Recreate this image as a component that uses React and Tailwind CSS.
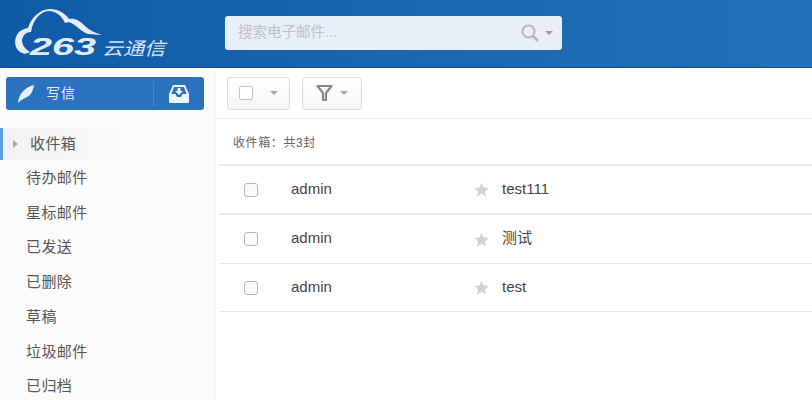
import React from "react";

const folders = ["待办邮件", "星标邮件", "已发送", "已删除", "草稿", "垃圾邮件", "已归档"];
const mails = [
    { subject: "test111", h: "h-[49px]", border: "border-b-2 border-b-[#e6e6e6]" },
    { subject: "测试", h: "h-[49px]", border: "border-b border-b-[#e8e8e8]" },
    { subject: "test", h: "h-[48px]", border: "border-b border-b-[#e8e8e8]" },
];
const cjk = "font-['Liberation_Sans','Noto_Sans_CJK_SC',sans-serif]";

const Caret = ({ className }) => (
    <span className={`inline-block w-0 h-0 border-x-[4px] border-x-transparent border-t-[4px] ${className}`} />
);

const Logo = () => (
    <div className="relative w-[170px] h-[60px] ml-[13px] mt-[5px] shrink-0">
        <svg width="110" height="50" viewBox="13 5 110 50" className="absolute left-0 top-0">
            <path d="M22 53 C15 50 14 42 16 37 C18 31 23 29 28 28 C31 18 40 9 50 9 C58 9 65 13 69 19 C75 18 80 21 84 25 C89 30 95 33 102 35 L88 34 C82 32 78 27 73 24 C70 22 68 22 65 23 C62 16 56 11 49 11 C41 11 33 19 31 32 C26 32 23 35 22 40 C22 45 25 49 30 52 C27 54 24 54 22 53 Z" fill="#e3edf7" />
        </svg>
        <span className="absolute left-[17px] top-[28px] text-[#e3edf7] text-[24px] leading-[28px] font-bold italic font-['Liberation_Sans',sans-serif] scale-x-[1.65] origin-left">263</span>
        <span className="absolute left-[89px] top-[31px] text-[#dbe7f3] text-[18px] leading-[22px] italic font-['Noto_Sans_CJK_SC',sans-serif] scale-x-[1.17] origin-left whitespace-nowrap">云通信</span>
    </div>
);

const App = () => {
    return (
        <div className={`w-[812px] h-[400px] overflow-hidden bg-white flex flex-col ${cjk}`}>
            <header className="h-[68px] shrink-0 flex bg-gradient-to-r from-[#0f5ba8] to-[#2371bb] border-b border-b-[#0d4f8f]">
                <Logo />
                <div className="ml-[42px] mt-[16px] w-[337px] h-[34px] bg-[#e8eff8] rounded-[3px] flex items-center pl-[13px] pr-[9px]">
                    <span className="text-[#bcc2c9] text-[14.5px]">搜索电子邮件...</span>
                    <svg width="20" height="20" viewBox="0 0 20 20" className="ml-auto" fill="none" stroke="#b5b9be">
                        <circle cx="8.5" cy="8.5" r="6" strokeWidth="2" />
                        <path d="M13 13 L18 18" strokeWidth="3" />
                    </svg>
                    <Caret className="ml-[5px] border-t-[#9a9ea3]" />
                </div>
            </header>

            <div className="flex flex-1 min-h-0">
                <aside className="w-[216px] shrink-0 bg-[#fbfbfb] border-r border-r-[#f3f3f3] pt-[9px]">
                    <div className="ml-[6px] w-[198px] h-[33px] bg-[#2b73bf] rounded-[3px] flex items-center text-[#e4edf6]">
                        <svg width="18" height="20" viewBox="0 0 18 20" className="ml-[11px]">
                            <path d="M1 19 C2 11 6 4 17 1 C16 7 14 12 8 14 C6 15 4 16 1 19 Z" fill="#e8f0f8" />
                        </svg>
                        <span className="ml-[11px] text-[14px] tracking-[1px]">写信</span>
                        <div className="ml-auto w-[51px] h-[25px] border-l border-l-[#4a86c6] flex items-center justify-center">
                            <svg width="22" height="20" viewBox="0 0 22 20">
                                <path d="M5 1 H17 L21 10 V18 Q21 19 20 19 H2 Q1 19 1 18 V10 Z" fill="#eef4fa" />
                                <path d="M6 3 H16 L18.5 10 H14.5 L13 13 H9 L7.5 10 H3.5 Z" fill="#2b73bf" />
                                <path d="M9.5 4 H12.5 V7 H15 L11 11 L7 7 H9.5 Z" fill="#eef4fa" />
                            </svg>
                        </div>
                    </div>

                    <nav className="mt-[18px]">
                        <div className="h-[32px] flex items-center border-l-[3px] border-l-[#5a9bd8] bg-gradient-to-r from-[#f1f1f1] to-[#fbfbfb] to-[60%]">
                            <span className="ml-[10px] w-0 h-0 border-y-[4px] border-y-transparent border-l-[5px] border-l-[#a8a8a8]" />
                            <span className="ml-[12px] text-[15px] tracking-[0.4px] text-[#555]">收件箱</span>
                        </div>
                        <ul className="mt-[1px]">
                            {folders.map((name) => (
                                <li key={name} className="h-[34.7px] flex items-center pl-[26px] text-[15px] tracking-[0.4px] text-[#555]">
                                    {name}
                                </li>
                            ))}
                        </ul>
                    </nav>
                </aside>

                <main className="flex-1 min-w-0 pl-[3px]">
                    <div className="h-[51px] -ml-[3px] flex items-center pl-[11px] gap-[12px] border-b border-b-[#ececec]">
                        <div className="w-[63px] h-[33px] border border-[#d9d9d9] rounded-[3px] bg-gradient-to-b from-white to-[#f5f5f5] flex items-center pl-[11px]">
                            <span className="w-[14px] h-[14px] border-[1.5px] border-[#c4c4c4] rounded-[2px] bg-white" />
                            <Caret className="ml-[17px] border-t-[#a5a5a5]" />
                        </div>
                        <div className="w-[60px] h-[33px] border border-[#d9d9d9] rounded-[3px] bg-gradient-to-b from-white to-[#f5f5f5] flex items-center pl-[13px]">
                            <svg width="17" height="18" viewBox="0 0 17 18" fill="none" stroke="#888" strokeWidth="2.2">
                                <path d="M1.5 2 H15.5 L10 9 V16 H7 V9 Z" strokeLinejoin="round" />
                            </svg>
                            <Caret className="ml-[7px] border-t-[#a5a5a5]" />
                        </div>
                    </div>

                    <div className="h-[47px] pt-[3px] flex items-center pl-[14px] border-b-2 border-b-[#ececec] text-[12px] tracking-[0.6px] text-[#666]">
                        收件箱：共3封
                    </div>

                    {mails.map((mail) => (
                        <div key={mail.subject} className={`${mail.h} ${mail.border} flex items-center`}>
                            <span className="ml-[25px] w-[14px] h-[14px] border-[1.5px] border-[#b5b5b5] rounded-[3px] bg-[#fafafa]" />
                            <span className="ml-[33px] w-[183px] text-[15px] text-[#444] font-['Liberation_Sans',sans-serif] -mt-[1px]">admin</span>
                            <svg width="15" height="15" viewBox="0 0 24 24" fill="#d3d3d3">
                                <path d="M12 1 L15.4 8.6 L23.5 9.4 L17.4 15 L19.1 23 L12 18.9 L4.9 23 L6.6 15 L0.5 9.4 L8.6 8.6 Z" />
                            </svg>
                            <span className="ml-[13px] text-[15px] text-[#444] -mt-[1px]">{mail.subject}</span>
                        </div>
                    ))}
                </main>
            </div>
        </div>
    );
};

export default App;
